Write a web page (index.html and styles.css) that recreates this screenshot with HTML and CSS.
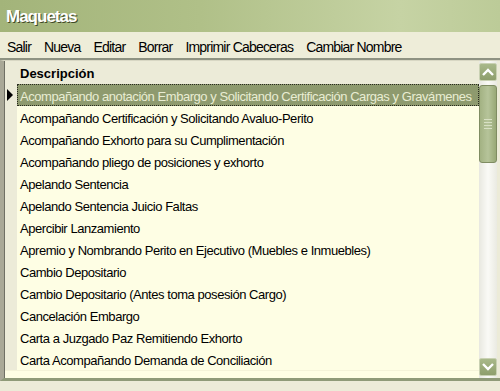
FILE: index.html
```html
<!DOCTYPE html>
<html lang="es">
<head>
  <meta charset="UTF-8">
  <title>Maquetas</title>
  <link rel="stylesheet" href="styles.css">
</head>
<body>
  <div class="window">
    <div class="titlebar">Maquetas</div>

    <div class="menubar">
      <span class="menu-item">Salir</span>
      <span class="menu-item">Nueva</span>
      <span class="menu-item">Editar</span>
      <span class="menu-item">Borrar</span>
      <span class="menu-item">Imprimir Cabeceras</span>
      <span class="menu-item">Cambiar Nombre</span>
    </div>

    <div class="grid">
      <div class="grid-table">
        <div class="grid-header">
          <div class="indicator"></div>
          <div class="cell head">Descripción</div>
        </div>
        <div class="grid-row selected">
          <div class="indicator"><span class="arrow"></span></div>
          <div class="cell">Acompañando anotación Embargo y Solicitando Certificación Cargas y Gravámenes</div>
        </div>
        <div class="grid-row"><div class="indicator"></div><div class="cell">Acompañando Certificación y Solicitando Avaluo-Perito</div></div>
        <div class="grid-row"><div class="indicator"></div><div class="cell">Acompañando Exhorto para su Cumplimentación</div></div>
        <div class="grid-row"><div class="indicator"></div><div class="cell">Acompañando pliego de posiciones y exhorto</div></div>
        <div class="grid-row"><div class="indicator"></div><div class="cell">Apelando Sentencia</div></div>
        <div class="grid-row"><div class="indicator"></div><div class="cell">Apelando Sentencia Juicio Faltas</div></div>
        <div class="grid-row"><div class="indicator"></div><div class="cell">Apercibir Lanzamiento</div></div>
        <div class="grid-row"><div class="indicator"></div><div class="cell">Apremio y Nombrando Perito en Ejecutivo (Muebles e Inmuebles)</div></div>
        <div class="grid-row"><div class="indicator"></div><div class="cell">Cambio Depositario</div></div>
        <div class="grid-row"><div class="indicator"></div><div class="cell">Cambio Depositario (Antes toma posesión Cargo)</div></div>
        <div class="grid-row"><div class="indicator"></div><div class="cell">Cancelación Embargo</div></div>
        <div class="grid-row"><div class="indicator"></div><div class="cell">Carta a Juzgado Paz Remitiendo Exhorto</div></div>
        <div class="grid-row"><div class="indicator"></div><div class="cell">Carta Acompañando Demanda de Conciliación</div></div>
        <div class="grid-filler"></div>
      </div>

      <div class="scrollbar">
        <div class="scroll-btn">
          <svg width="12" height="8" viewBox="0 0 12 8"><path d="M1 7 L6 2 L11 7" fill="none" stroke="#fff" stroke-width="2.4"/></svg>
        </div>
        <div class="scroll-thumb">
          <span class="grip"></span><span class="grip"></span><span class="grip"></span><span class="grip"></span>
        </div>
        <div class="scroll-track"></div>
        <div class="scroll-btn">
          <svg width="12" height="8" viewBox="0 0 12 8"><path d="M1 1 L6 6 L11 1" fill="none" stroke="#fff" stroke-width="2.4"/></svg>
        </div>
      </div>
    </div>
  </div>
</body>
</html>
```

FILE: styles.css
```css
/* Window */
body {
  margin: 0;
  background-color: #ecebd8;
  font-family: 'Liberation Sans', Arial, sans-serif;
  color: #000;
}

.window {
  width: 500px;
  height: 391px;
  overflow: hidden;
  background-color: #ecebd8;
}

/* Title bar */
.titlebar {
  height: 32px;
  box-sizing: border-box;
  padding: 7px 0 0 6px;
  background: linear-gradient(90deg, #a3b47a 0%, #b0c088 40%, #c6d3a4 80%, #bccb98 100%);
  color: #fff;
  font-weight: bold;
  font-size: 17px;
  letter-spacing: -1px;
  text-shadow: 1px 1px 0 #3f4a28;
}

/* Menu */
.menubar {
  height: 28px;
  box-sizing: border-box;
  padding: 7px 0 0 7px;
  display: flex;
  gap: 13px;
  font-size: 14px;
  letter-spacing: -0.8px;
  background-color: #eeedd9;
  border-bottom: 2px solid #8e9282;
}

/* Grid */
.grid {
  display: flex;
  height: 317px;
  border-left: 4px solid #a9a897;
  border-top: 1px solid #d8d7c4;
  border-bottom: 3px solid #8f9a78;
}

.grid-table {
  flex: 1;
  min-width: 0;
  display: flex;
  flex-direction: column;
  border-left: 1px solid #6f6f64;
  background-color: #fefee4;
}

.grid-header,
.grid-row {
  display: flex;
  height: 22px;
  flex-shrink: 0;
}

.grid-header {
  height: 23px;
  background-color: #ecebd8;
}

.indicator {
  width: 12px;
  flex-shrink: 0;
  background-color: #ecebd8;
  display: flex;
  align-items: center;
}

.arrow {
  width: 0;
  height: 0;
  margin-left: 2px;
  border-top: 6px solid transparent;
  border-bottom: 6px solid transparent;
  border-left: 6px solid #000;
}

.cell {
  flex: 1;
  min-width: 0;
  box-sizing: border-box;
  padding: 3px 0 0 3px;
  font-size: 13px;
  letter-spacing: -0.45px;
  line-height: 19px;
  white-space: nowrap;
  overflow: hidden;
}

.cell.head {
  font-weight: bold;
  font-size: 13px;
  letter-spacing: 0;
  line-height: 20px;
}

.grid-row.selected .cell {
  background-color: #8e9a6e;
  color: #e9edd3;
  outline: 1px dotted #2a2a20;
  outline-offset: -1px;
}

.grid-filler {
  flex: 1;
  border-top: 1px solid #f4f3d8;
}

/* Scrollbar */
.scrollbar {
  width: 18px;
  flex-shrink: 0;
  margin-right: 3px;
  display: flex;
  flex-direction: column;
  background: linear-gradient(90deg, #e8e8e0, #fafaf6 50%, #eaeae2);
  padding-bottom: 2px;
}

.scroll-btn {
  height: 18px;
  flex-shrink: 0;
  display: flex;
  align-items: center;
  justify-content: center;
  background: linear-gradient(180deg, #a9b98a, #8e9e6c);
  border: 1px solid #c9d1b3;
  border-radius: 2px;
  box-sizing: border-box;
}

.scroll-btn:first-child {
  margin-top: 2px;
}

.scroll-thumb {
  height: 78px;
  margin-top: 4px;
  flex-shrink: 0;
  display: flex;
  flex-direction: column;
  align-items: center;
  justify-content: center;
  gap: 2px;
  background: linear-gradient(90deg, #a3b283, #b6c49a 50%, #98a877);
  border: 1px solid #7f8c62;
  border-radius: 3px;
  box-sizing: border-box;
}

.grip {
  width: 8px;
  height: 1px;
  background-color: #d8e0c4;
}

.scroll-track {
  flex: 1;
}
```
